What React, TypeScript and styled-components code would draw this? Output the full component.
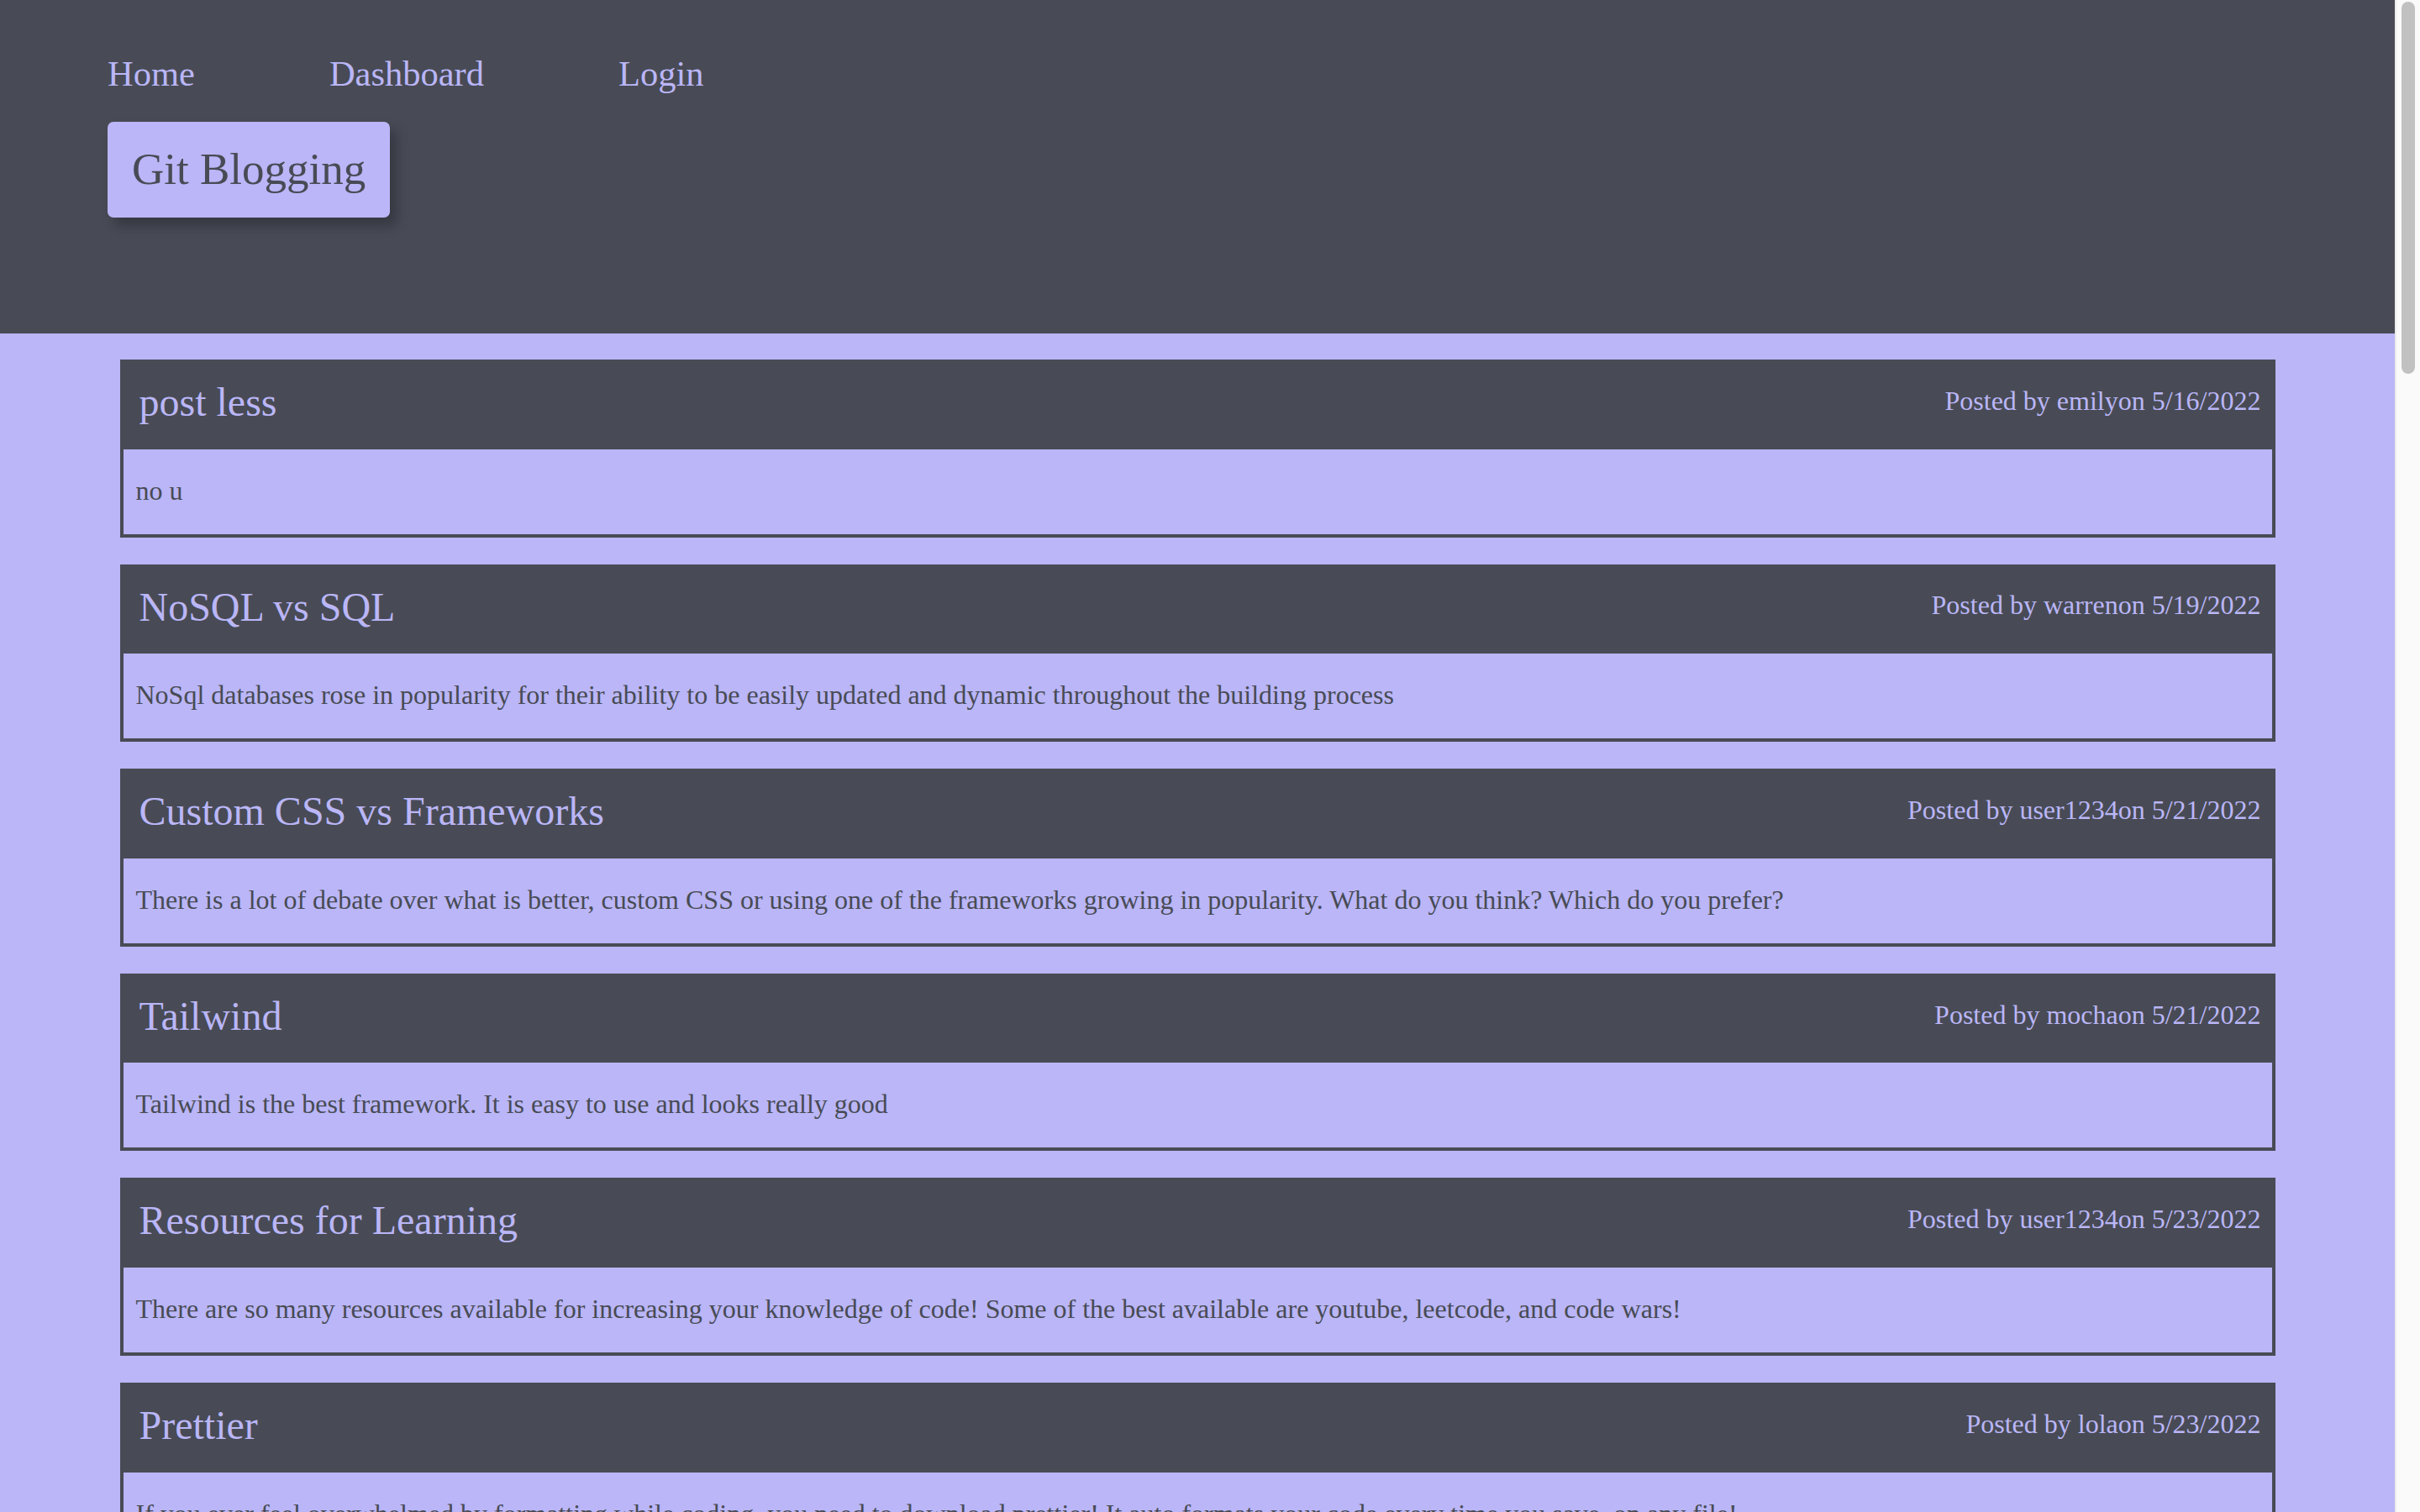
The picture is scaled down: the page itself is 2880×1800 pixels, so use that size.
import React from "react";
import styled, { createGlobalStyle } from "styled-components";

const DARK = "#484b55";
const LAV = "#bab6f7";

const GlobalStyle = createGlobalStyle`
  html, body {
    margin: 0;
    height: 100%;
    overflow: hidden;
  }
  body {
    background: ${LAV};
    font-family: "Liberation Serif", "Times New Roman", serif;
    color: ${DARK};
  }
  * {
    box-sizing: border-box;
  }
`;

const Viewport = styled.div`
  height: 100vh;
  display: grid;
  grid-template-columns: 1fr 30px;
`;

const Scroller = styled.div`
  overflow-y: auto;
  scrollbar-width: none;
  &::-webkit-scrollbar {
    display: none;
  }
`;

const ScrollTrack = styled.div`
  position: relative;
  background: #fafafa;
  border-left: 2px solid #ececec;
`;

const ScrollThumb = styled.div`
  position: absolute;
  top: 2px;
  left: 6px;
  width: 16px;
  height: 443px;
  border-radius: 8px;
  background: #c1c1c1;
`;

const Header = styled.header`
  background: ${DARK};
  height: 397px;
  padding: 64px 0 0 128px;
  display: flex;
  flex-direction: column;
  align-items: flex-start;
`;

const Nav = styled.nav`
  display: flex;
  gap: 160px;
`;

const NavLink = styled.a`
  font-size: 42.5px;
  line-height: 47px;
  color: ${LAV};
  text-decoration: none;
  cursor: pointer;
`;

const Logo = styled.h1`
  margin: 34px 0 0;
  background: ${LAV};
  color: ${DARK};
  font-weight: normal;
  font-size: 53px;
  line-height: 61px;
  padding: 26px 29px 27px;
  border-radius: 7px;
  box-shadow: 8px 10px 14px rgba(20, 20, 30, 0.35);
`;

const Main = styled.main`
  padding: 31px 0 32px;
  display: flex;
  flex-direction: column;
  align-items: center;
  gap: 32px;
`;

const Card = styled.article`
  width: 90%;
  border: 4px solid ${DARK};
`;

const CardHeader = styled.div`
  background: ${DARK};
  display: flex;
  justify-content: space-between;
  align-items: center;
  padding: 21px 13px 29px 19px;
`;

const Title = styled.h2`
  margin: 0;
  font-weight: normal;
  font-size: 48px;
  line-height: 52.6px;
  color: ${LAV};
`;

const Meta = styled.span`
  font-size: 32px;
  line-height: 37px;
  color: ${LAV};
  margin-top: -4px;
`;

const Body = styled.p`
  margin: 0;
  padding: 31px 15px 33px;
  font-size: 32px;
  line-height: 37px;
  color: ${DARK};
`;

const posts = [
  {
    title: "post less",
    author: "emily",
    date: "5/16/2022",
    body: "no u",
  },
  {
    title: "NoSQL vs SQL",
    author: "warren",
    date: "5/19/2022",
    body: "NoSql databases rose in popularity for their ability to be easily updated and dynamic throughout the building process",
  },
  {
    title: "Custom CSS vs Frameworks",
    author: "user1234",
    date: "5/21/2022",
    body: "There is a lot of debate over what is better, custom CSS or using one of the frameworks growing in popularity. What do you think? Which do you prefer?",
  },
  {
    title: "Tailwind",
    author: "mocha",
    date: "5/21/2022",
    body: "Tailwind is the best framework. It is easy to use and looks really good",
  },
  {
    title: "Resources for Learning",
    author: "user1234",
    date: "5/23/2022",
    body: "There are so many resources available for increasing your knowledge of code! Some of the best available are youtube, leetcode, and code wars!",
  },
  {
    title: "Prettier",
    author: "lola",
    date: "5/23/2022",
    body: "If you ever feel overwhelmed by formatting while coding, you need to download prettier! It auto formats your code every time you save, on any file!",
  },
];

export default function App() {
  return (
    <>
      <GlobalStyle />
      <Viewport>
        <Scroller>
          <Header>
            <Nav>
              <NavLink>Home</NavLink>
              <NavLink>Dashboard</NavLink>
              <NavLink>Login</NavLink>
            </Nav>
            <Logo>Git Blogging</Logo>
          </Header>
          <Main>
            {posts.map((p) => (
              <Card key={p.title}>
                <CardHeader>
                  <Title>{p.title}</Title>
                  <Meta>
                    Posted by {p.author}on {p.date}
                  </Meta>
                </CardHeader>
                <Body>{p.body}</Body>
              </Card>
            ))}
          </Main>
        </Scroller>
        <ScrollTrack>
          <ScrollThumb />
        </ScrollTrack>
      </Viewport>
    </>
  );
}
